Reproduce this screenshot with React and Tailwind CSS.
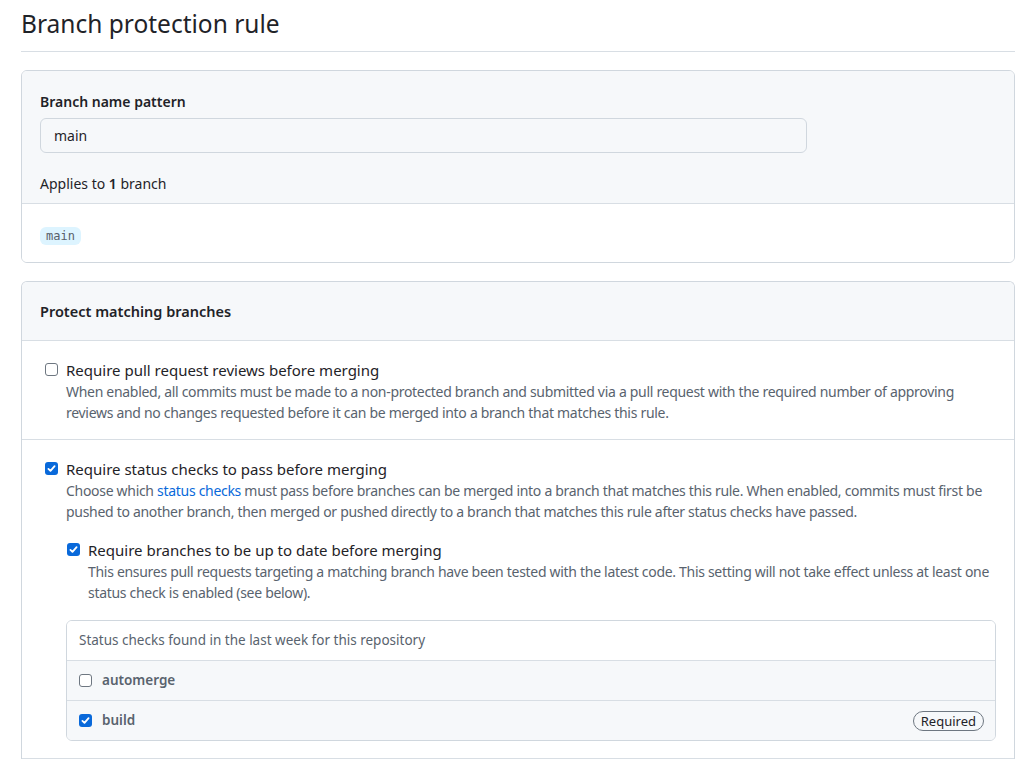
import React from 'react';

const Check = ({ checked }) =>
  checked ? (
    <span className="flex h-[13px] w-[13px] shrink-0 items-center justify-center rounded-[3px] bg-[#0969da]">
      <svg width="11" height="11" viewBox="0 0 16 16" fill="none">
        <path d="M3.5 8.5l3 3 6-7" stroke="white" strokeWidth="2.6" strokeLinecap="round" strokeLinejoin="round" />
      </svg>
    </span>
  ) : (
    <span className="block h-[13px] w-[13px] shrink-0 rounded-[3px] border border-[#6e7781] bg-white"></span>
  );

const Option = ({ checked, title, children }) => (
  <div className="flex items-start">
    <div className="w-[22px] shrink-0 pt-[3px] pl-[1px]">
      <Check checked={checked} />
    </div>
    <div className="min-w-0 flex-1">
      <div className="text-[15px] leading-[21px] text-[#1f2328]">{title}</div>
      <p className="text-[14px] leading-[21px] tracking-[-0.3px] text-[#59636e]">{children}</p>
    </div>
  </div>
);

const App = () => {
  const checks = [
    { name: 'automerge', checked: false, required: false },
    { name: 'build', checked: true, required: true },
  ];

  return (
    <div className="min-h-[765px] bg-white pl-[21px] pr-[8px] text-[#1f2328]" style={{ fontFamily: '"Noto Sans", "Liberation Sans", sans-serif' }}>
      <h1 className="mt-[6px] border-b border-[#d8dee4] pb-[9px] text-[24.5px] leading-[36px] font-normal">Branch protection rule</h1>

      {/* Branch name pattern */}
      <div className="mt-[18px] overflow-hidden rounded-md border border-[#d0d7de]">
        <div className="border-b border-[#d8dee4] bg-[#f6f8fa] px-[18px] pt-[20px] pb-[9px]">
          <label className="block text-[14px] leading-[21px] font-semibold">Branch name pattern</label>
          <div className="mt-[6px] flex h-[35px] w-[767px] items-center rounded-md border border-[#d0d7de] bg-[#f6f8fa] px-[13px] text-[14px]">
            main
          </div>
          <div className="mt-[20px] text-[14px] leading-[21px]">
            Applies to <span className="font-semibold">1</span> branch
          </div>
        </div>
        <div className="bg-white px-[18px] pt-[23px] pb-[17px]">
          <span className="block w-fit rounded-md bg-[#ddf4ff] px-[6px] text-[12px] leading-[18px] text-[#57606a]" style={{ fontFamily: '"DejaVu Sans Mono", "Liberation Mono", monospace' }}>
            main
          </span>
        </div>
      </div>

      {/* Protect matching branches */}
      <div className="mt-[18px] overflow-hidden rounded-t-md border-x border-t border-[#d0d7de]">
        <div className="flex h-[59px] items-center border-b border-[#d8dee4] bg-[#f6f8fa] px-[18px] pt-[2px] text-[14.5px] font-semibold">
          Protect matching branches
        </div>

        <div className="border-b border-[#d8dee4] pt-[19px] pr-[14px] pb-[16px] pl-[22px]">
          <Option title="Require pull request reviews before merging">
            When enabled, all commits must be made to a non-protected branch and submitted via a pull request with the required number of approving reviews and no changes requested before it can be merged into a branch that matches this rule.
          </Option>
        </div>

        <div className="border-b border-[#d8dee4] pt-[19px] pr-[14px] pb-[17px] pl-[22px]">
          <Option checked title="Require status checks to pass before merging">
            Choose which <a className="text-[#0969da]">status checks</a> must pass before branches can be merged into a branch that matches this rule. When enabled, commits must first be pushed to another branch, then merged or pushed directly to a branch that matches this rule after status checks have passed.
          </Option>

          <div className="mt-[18px] pl-[22px]">
            <Option checked title="Require branches to be up to date before merging">
              This ensures pull requests targeting a matching branch have been tested with the latest code. This setting will not take effect unless at least one status check is enabled (see below).
            </Option>
          </div>

          <div className="mt-[17px] mr-[4px] ml-[22px] overflow-hidden rounded-md border border-[#d0d7de]">
            <div className="flex h-[40px] items-center border-b border-[#d8dee4] bg-white px-[12px] text-[13.5px] text-[#59636e]">
              Status checks found in the last week for this repository
            </div>
            {checks.map((c, i) => (
              <div
                key={c.name}
                className={`flex items-center bg-[#f6f8fa] pr-[11px] pl-[12px] ${i < checks.length - 1 ? 'h-[40px] border-b border-[#d8dee4]' : 'h-[39px]'}`}
              >
                <Check checked={c.checked} />
                <span className="ml-[10px] flex-1 text-[13.5px] font-semibold text-[#59636e]">{c.name}</span>
                {c.required && (
                  <span className="rounded-full border border-[#6e7781] px-[7px] text-[13px] leading-[18px] text-[#1f2328]">Required</span>
                )}
              </div>
            ))}
          </div>
        </div>
      </div>
    </div>
  );
};

export default App;
